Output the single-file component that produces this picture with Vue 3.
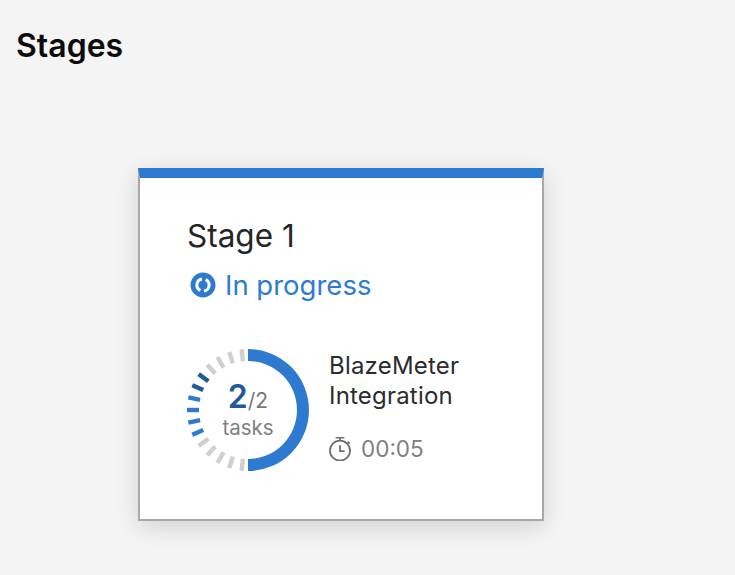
<template>
  <div class="page">
    <h1 class="title">Stages</h1>
    <div class="card">
      <div class="name">Stage 1</div>
      <div class="status">
        <svg class="status-icon" viewBox="0 0 26 26" width="26" height="26">
          <circle cx="13" cy="13" r="12.5" fill="#2f7ad1" />
          <path d="M12 7A6 6 0 0 0 10.4 18.4" fill="none" stroke="#fff" stroke-width="3" />
          <path d="M14 19A6 6 0 0 0 15.6 7.6" fill="none" stroke="#fff" stroke-width="3" />
        </svg>
        <span>In progress</span>
      </div>
      <div class="body">
        <div class="ring">
          <svg viewBox="0 0 122 122" width="122" height="122">
            <path d="M61 0A61 61 0 0 1 61 122L61 110A49 49 0 0 0 61 12Z" fill="#2f7ad1" />
            <line
              v-for="t in ticks"
              :key="t.a"
              :x1="t.x1"
              :y1="t.y1"
              :x2="t.x2"
              :y2="t.y2"
              :stroke="t.color"
              stroke-width="4.4"
            />
          </svg>
          <div class="ring-text">
            <div class="count"><b>2</b><span>/2</span></div>
            <div class="tasks">tasks</div>
          </div>
        </div>
        <div class="info">
          <div class="job">BlazeMeter<br />Integration</div>
          <div class="time">
            <svg viewBox="1 1 22 22" width="24" height="24" fill="none" stroke="#6f6f6f" stroke-width="1.6">
              <circle cx="12" cy="13.5" r="9.2" />
              <path d="M8 1.6h8M12 1.6v3M19 5.2l1.8 1.8M12 8.5v5.5h4.2" />
            </svg>
            <span>00:05</span>
          </div>
        </div>
      </div>
    </div>
  </div>
</template>

<script setup>
// left half of the ring, going anticlockwise from the top
const colors = {
  gray: '#cfcfcf',
  dark: '#1f5a9c',
  blue: '#2f7ad1',
};
const order = [
  'gray', 'gray', 'gray', 'gray',
  'dark', 'dark',
  'blue', 'blue', 'blue', 'blue',
  'gray', 'gray', 'gray', 'gray', 'gray',
];

const ticks = order.map((c, i) => {
  const a = ((6 + i * 12) * Math.PI) / 180;
  return {
    a: i,
    x1: 61 - 49 * Math.sin(a),
    y1: 61 - 49 * Math.cos(a),
    x2: 61 - 61 * Math.sin(a),
    y2: 61 - 61 * Math.cos(a),
    color: colors[c],
  };
});
</script>

<style scoped>
.page {
  width: 735px;
  height: 575px;
  box-sizing: border-box;
  padding: 28px 0 0 16px;
  overflow: hidden;
  background: #f4f4f4;
  font-family: Inter, "Liberation Sans", sans-serif;
}

.title {
  margin: 0;
  font-size: 32px;
  line-height: 36px;
  font-weight: 600;
  color: #0c0c0c;
}

.card {
  box-sizing: border-box;
  width: 406px;
  height: 353px;
  margin: 104px 0 0 122px;
  padding: 40px 47px 0;
  background: #fff;
  border: 2px solid #a8a8a8;
  border-top: 10px solid #2f7ad1;
  box-shadow: 0 6px 22px rgba(0, 0, 0, 0.14);
}

.name {
  font-size: 31.5px;
  line-height: 36px;
  color: #262626;
}

.status {
  display: flex;
  align-items: center;
  gap: 9px;
  margin-top: 13px;
  padding-left: 3px;
  font-size: 27.5px;
  line-height: 36px;
  color: #2f7ad1;
}

.body {
  display: flex;
  margin-top: 46px;
}

.ring {
  position: relative;
  width: 122px;
  height: 122px;
}

.ring svg {
  display: block;
}

.ring-text {
  position: absolute;
  inset: 0;
  display: flex;
  flex-direction: column;
  align-items: center;
  justify-content: center;
}

.count {
  color: #777;
  font-size: 21px;
  line-height: 32px;
}

.count b {
  font-size: 32px;
  font-weight: 600;
  color: #1f5a9c;
}

.tasks {
  font-size: 20.5px;
  line-height: 22px;
  color: #808080;
}

.info {
  margin-left: 20px;
  padding-top: 2px;
}

.job {
  font-size: 24px;
  line-height: 30px;
  letter-spacing: 0.2px;
  color: #2c2c2c;
}

.time {
  display: flex;
  align-items: center;
  gap: 9px;
  margin-top: 24px;
  margin-left: -1px;
  font-size: 22.5px;
  line-height: 28px;
  color: #808080;
}
</style>

<style>
html, body {
  background: #f4f4f4;
}
</style>
